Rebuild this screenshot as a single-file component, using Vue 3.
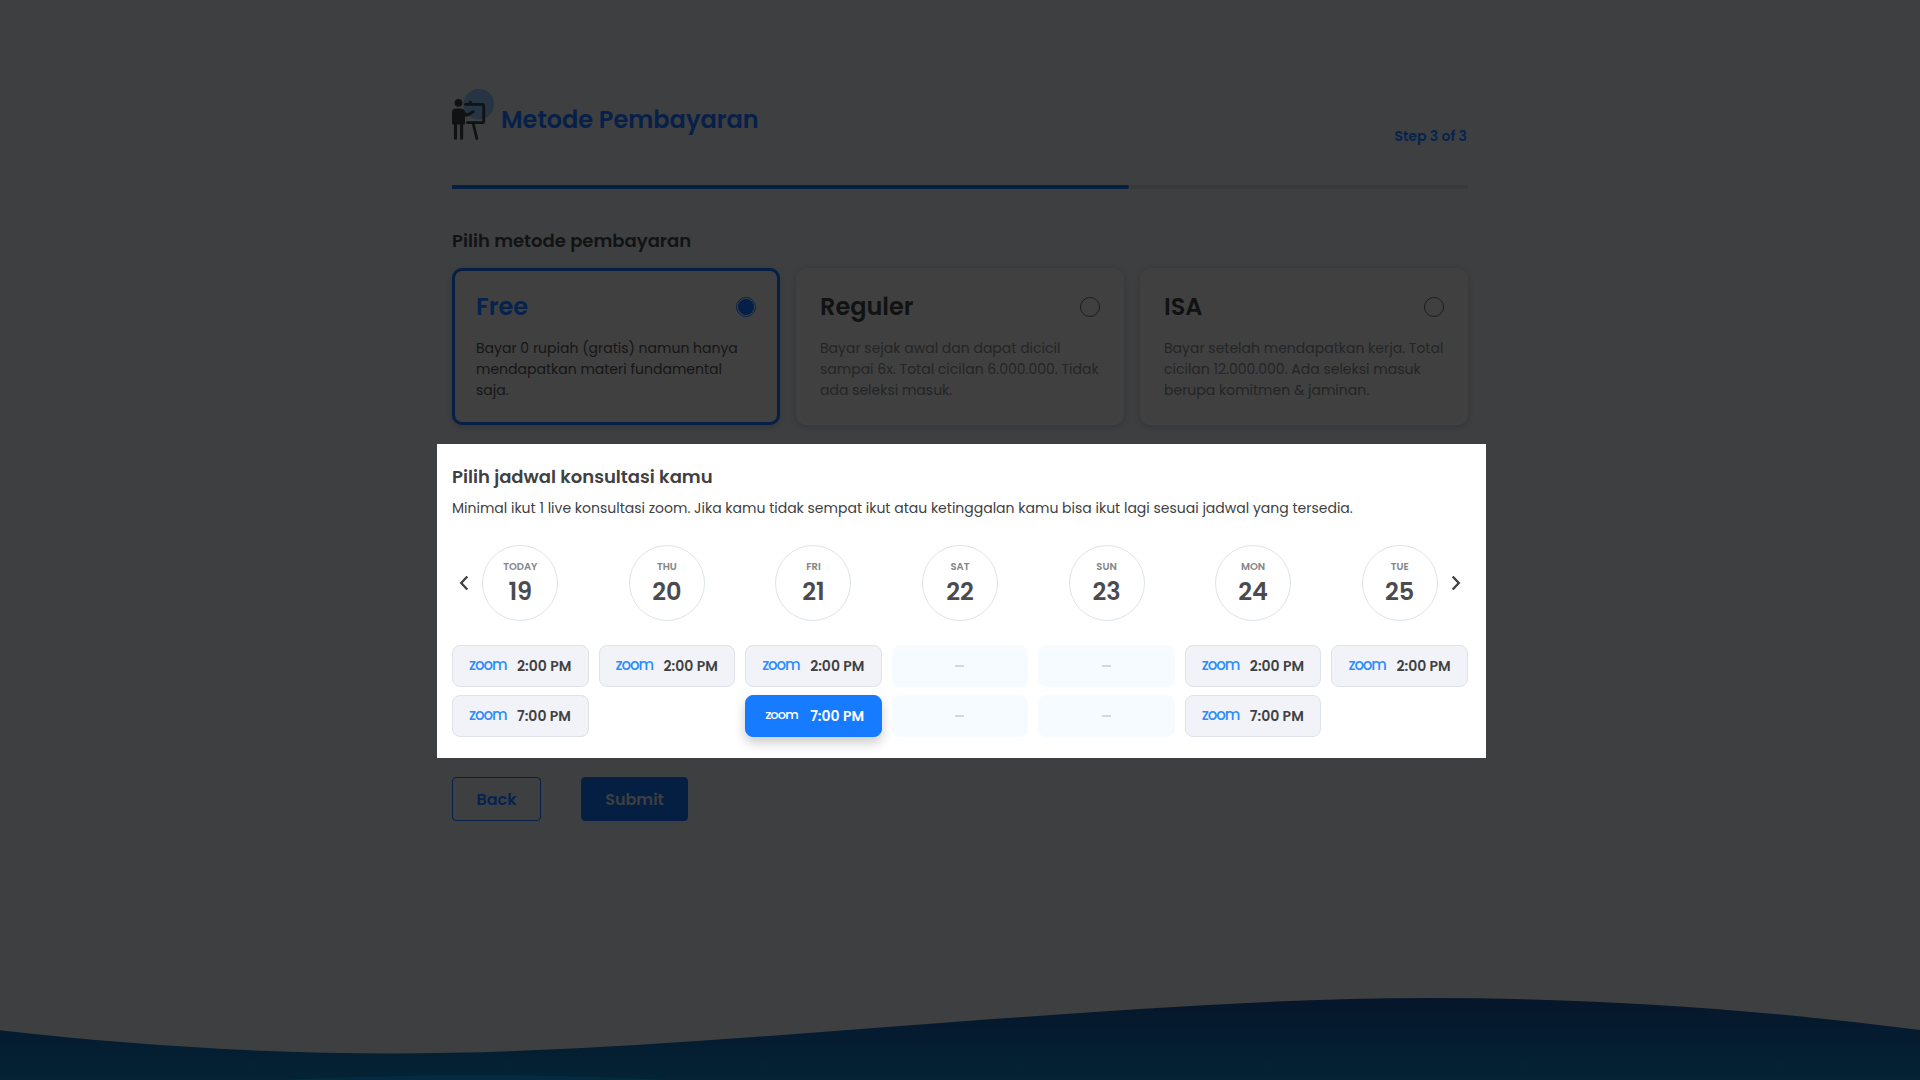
<script setup>
const plans = [
  {
    name: 'Free',
    active: true,
    text: 'Bayar 0 rupiah (gratis) namun hanya mendapatkan materi fundamental saja.',
  },
  {
    name: 'Reguler',
    active: false,
    text: 'Bayar sejak awal dan dapat dicicil sampai 6x. Total cicilan 6.000.000. Tidak ada seleksi masuk.',
  },
  {
    name: 'ISA',
    active: false,
    text: 'Bayar setelah mendapatkan kerja. Total cicilan 12.000.000. Ada seleksi masuk berupa komitmen & jaminan.',
  },
]

const early = { time: '2:00 PM' }
const late = { time: '7:00 PM' }
const days = [
  { label: 'TODAY', date: 19, slots: [early, late] },
  { label: 'THU', date: 20, slots: [early] },
  { label: 'FRI', date: 21, slots: [early, { time: '7:00 PM', active: true }] },
  { label: 'SAT', date: 22, slots: [null, null] },
  { label: 'SUN', date: 23, slots: [null, null] },
  { label: 'MON', date: 24, slots: [early, late] },
  { label: 'TUE', date: 25, slots: [early] },
]
</script>

<template>
  <div class="page">
    <svg class="wave" viewBox="0 0 1920 90" width="1920" height="90">
      <defs>
        <linearGradient id="sea" x1="0" y1="0" x2="0" y2="1">
          <stop offset="0.08" stop-color="#06172b" />
          <stop offset="0.55" stop-color="#051d31" />
          <stop offset="1" stop-color="#042335" />
        </linearGradient>
      </defs>
      <path
        fill="url(#sea)"
        d="M0 40.3C130 55 261 63.4 392 63.4C581 63.4 771 45.1 960 31.5C1117 20.2 1274 8 1431 8C1594 8 1757 19 1920 40V90H0Z"
      />
      <path fill="#042b40" d="M280 90C400 83.500 540 83.500 670 90Z" />
    </svg>

    <main class="form">
      <header class="head">
        <div class="brand">
          <svg class="brand-icon" viewBox="452 88 44 53" width="44" height="53">
            <circle cx="478.700" cy="104.200" r="15.300" fill="#263443" />
            <g fill="none" stroke="#111213" stroke-linecap="round" stroke-linejoin="round">
              <path stroke-width="2.800" d="M465.500 104.400H482.200Q483.700 104.400 483.700 105.900V121.200Q483.700 122.700 482.200 122.700H467.300" />
              <path stroke-width="2.800" d="M473.300 124L476.800 138.500" />
              <path stroke-width="3" d="M463 112L466.800 115.300L473.200 111.800" />
              <path stroke-width="3.100" d="M455.500 122V138.200M461.600 122V138.200" />
            </g>
            <g fill="#111213">
              <circle cx="458.500" cy="102.800" r="3.900" />
              <circle cx="470.300" cy="102.500" r="1.700" />
              <path d="M452 112.500Q452 108.500 456 108.500H461.500Q463 108.500 464.200 110L465 112V124.500H453.500Q452 124.500 452 123Z" />
            </g>
          </svg>
          <h1>Metode Pembayaran</h1>
        </div>
        <span class="step">Step 3 of 3</span>
      </header>

      <div class="progress"><div class="progress-fill"></div></div>

      <h2 class="dim-heading">Pilih metode pembayaran</h2>
      <div class="plans">
        <article v-for="plan in plans" :key="plan.name" class="plan" :class="{ active: plan.active }">
          <div class="plan-top">
            <h3>{{ plan.name }}</h3>
            <span class="radio"></span>
          </div>
          <p>{{ plan.text }}</p>
        </article>
      </div>

      <section class="schedule">
        <h2>Pilih jadwal konsultasi kamu</h2>
        <p class="hint">
          Minimal ikut 1 live konsultasi zoom. Jika kamu tidak sempat ikut atau ketinggalan kamu bisa ikut lagi sesuai
          jadwal yang tersedia.
        </p>
        <div class="calendar">
          <svg class="arrow prev" viewBox="0 0 10 16" width="10" height="16"><path d="M8.300 1.500L2.200 8L8.300 14.500" /></svg>
          <svg class="arrow next" viewBox="0 0 10 16" width="10" height="16"><path d="M1.700 1.500L7.800 8L1.700 14.500" /></svg>
          <div v-for="day in days" :key="day.date" class="day">
            <div class="date">
              <span class="date-label">{{ day.label }}</span>
              <span class="date-number">{{ day.date }}</span>
            </div>
            <div
              v-for="(slot, i) in day.slots"
              :key="i"
              class="slot"
              :class="{ empty: !slot, active: slot && slot.active }"
            >
              <template v-if="slot">
                <span class="zoom">zoom</span>
                <span class="time">{{ slot.time }}</span>
              </template>
              <span v-else class="dash"></span>
            </div>
          </div>
        </div>
      </section>

      <div class="actions">
        <button class="back">Back</button>
        <button class="submit">Submit</button>
      </div>
    </main>
  </div>
</template>

<style>
body {
  margin: 0;
  background: #3e3f41;
}
</style>

<style scoped>
.page {
  position: relative;
  width: 1920px;
  height: 1080px;
  overflow: hidden;
  background: #3e3f41;
  font-family: Poppins, "Inter", sans-serif;
}
.page * {
  box-sizing: border-box;
}
h1,
h2,
h3,
p {
  margin: 0;
}
.wave {
  position: absolute;
  left: 0;
  bottom: 0;
}
.form {
  position: relative;
  width: 1016px;
  margin: 0 auto;
  padding-top: 88px;
}
.head {
  display: flex;
  justify-content: space-between;
  height: 97px;
}
.brand {
  display: flex;
  gap: 5px;
}
h1 {
  margin-top: 14px;
  font-size: 24px;
  line-height: 36px;
  font-weight: 600;
  color: #062049;
}
.step {
  margin: 38px 1px 0 0;
  font-size: 14px;
  line-height: 20px;
  font-weight: 600;
  color: #06234e;
}
.progress {
  height: 4px;
  background: #38393b;
}
.progress-fill {
  width: 66.67%;
  height: 4px;
  border-radius: 0 2px 2px 0;
  background: #051f42;
}
h2 {
  font-size: 18px;
  line-height: 28px;
  font-weight: 600;
}
.dim-heading {
  margin-top: 38px;
  color: #121314;
}
.plans {
  display: grid;
  grid-template-columns: repeat(3, 328px);
  gap: 16px;
  margin-top: 13px;
}
.plan {
  height: 157px;
  padding: 24px;
  border-radius: 10px;
  background: #404040;
  box-shadow: 0 2px 6px rgba(0, 0, 0, 0.16);
  color: #242526;
}
.plan.active {
  padding: 21px;
  border: 3px solid #051f46;
  color: #151617;
}
.plan-top {
  display: flex;
  align-items: center;
  justify-content: space-between;
  height: 30px;
}
h3 {
  font-size: 24px;
  line-height: 30px;
  font-weight: 600;
  color: #111213;
}
.active h3 {
  color: #06234f;
}
.radio {
  width: 20px;
  height: 20px;
  border: 1px solid #1c1d1e;
  border-radius: 50%;
}
.active .radio {
  padding: 1px;
  border-color: #06234f;
  background: #051f46 content-box;
}
.plan p {
  margin-top: 16px;
  font-size: 14px;
  line-height: 21px;
}
.schedule {
  width: 1049px;
  height: 314px;
  margin: 19px 0 0 -15px;
  padding: 19px 18px 0 15px;
  background: #fff;
}
.schedule h2 {
  color: #404142;
}
.hint {
  margin-top: 7px;
  font-size: 14px;
  line-height: 21px;
  white-space: nowrap;
  color: #404142;
}
.calendar {
  position: relative;
  display: grid;
  grid-template-columns: repeat(7, 1fr);
  gap: 10px;
  margin-top: 26px;
}
.arrow {
  position: absolute;
  top: 30px;
  fill: none;
  stroke: #404142;
  stroke-width: 2.3;
}
.prev {
  left: 7px;
}
.next {
  right: 7px;
}
.day {
  display: flex;
  flex-direction: column;
  gap: 8px;
}
.date {
  display: flex;
  flex-direction: column;
  align-items: center;
  align-self: center;
  width: 76px;
  height: 76px;
  margin-bottom: 16px;
  padding-top: 13px;
  border: 1px solid #dde4e9;
  border-radius: 50%;
}
.date-label {
  font-size: 10px;
  line-height: 16px;
  font-weight: 600;
  color: #858585;
}
.date-number {
  font-size: 24px;
  line-height: 34px;
  font-weight: 600;
  color: #4b4b4f;
}
.slot {
  display: flex;
  align-items: center;
  height: 42px;
  padding-left: 16px;
  border: 1px solid #dde3e8;
  border-radius: 8px;
  background: #f2f3f8;
  color: #404142;
}
.slot.empty {
  justify-content: center;
  padding: 0;
  border-color: #f6fbff;
  background: #f6fbff;
}
.dash {
  width: 9px;
  height: 2px;
  background: #d5d8db;
}
.slot.active {
  border-color: #177bff;
  background: #177bff;
  box-shadow: 0 6px 12px rgba(0, 0, 0, 0.2);
  color: #fff;
}
.zoom {
  width: 38px;
  margin-right: 10px;
  padding-bottom: 2px;
  font-size: 15px;
  line-height: 20px;
  font-weight: 500;
  letter-spacing: -1.1px;
  color: #2d8cff;
}
.active .zoom {
  padding-left: 3px;
  font-size: 13px;
  letter-spacing: -0.9px;
  color: #fff;
}
.time {
  font-size: 14px;
  line-height: 21px;
  font-weight: 600;
  white-space: nowrap;
}
.actions {
  display: flex;
  gap: 40px;
  margin-top: 19px;
}
button {
  height: 44px;
  padding: 1px 0 0;
  border: 1px solid #051f46;
  border-radius: 4px;
  font: 600 16px/24px Poppins, "Inter", sans-serif;
}
.back {
  width: 89px;
  background: transparent;
  color: #06234f;
}
.submit {
  width: 107px;
  background: #051f42;
  color: #3e3f41;
}
</style>
